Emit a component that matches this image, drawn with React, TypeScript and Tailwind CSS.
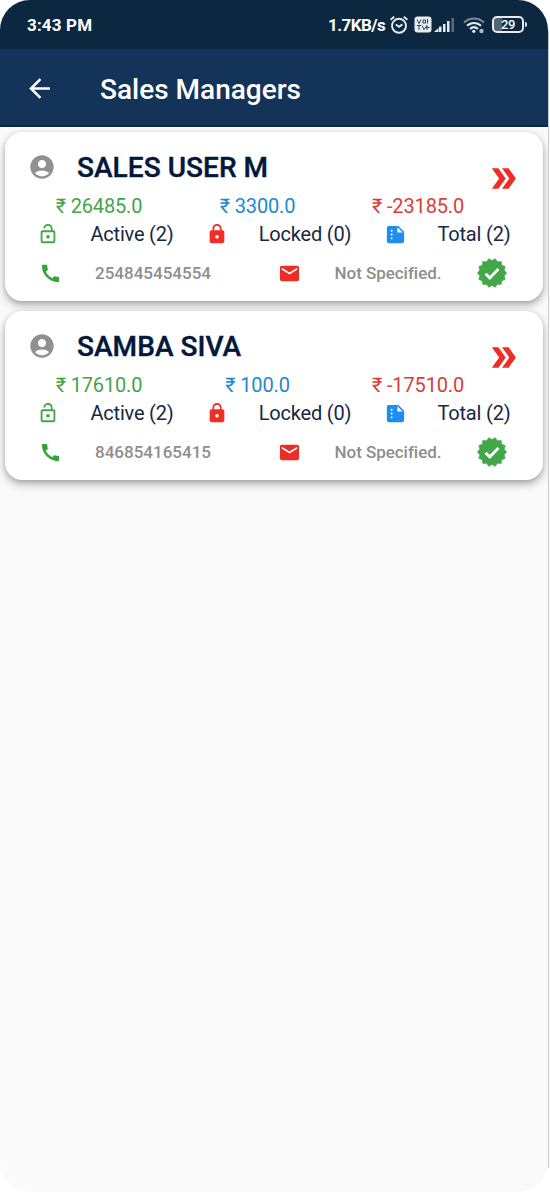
import React from 'react';
import {
    MdAccountCircle,
    MdArrowBack,
    MdCall,
    MdDoubleArrow,
    MdEmail,
    MdLock,
    MdLockOpen,
    MdSummarize,
} from 'react-icons/md';

interface Manager {
    id: number;
    name: string;
    credit: string;
    paid: string;
    balance: string;
    active: number;
    locked: number;
    total: number;
    phone: string;
    email?: string;
}

const managers: Manager[] = [
    { id: 1, name: 'SALES USER M', credit: '26485.0', paid: '3300.0', balance: '-23185.0', active: 2, locked: 0, total: 2, phone: '254845454554' },
    { id: 2, name: 'SAMBA SIVA', credit: '17610.0', paid: '100.0', balance: '-17510.0', active: 2, locked: 0, total: 2, phone: '846854165415' },
];

// Seal outline with 14 teeth
const sealPoints = Array.from({ length: 28 }, (_, i) => {
    const r = i % 2 === 0 ? 14.7 : 12.5;
    const a = (i * Math.PI) / 14;
    return `${(15 + r * Math.cos(a)).toFixed(2)},${(15 + r * Math.sin(a)).toFixed(2)}`;
}).join(' ');

const VerifiedSeal: React.FC = () => (
    <svg viewBox="0 0 30 30" className="w-[30px] h-[30px] shrink-0">
        <polygon points={sealPoints} fill="#43a648" stroke="#43a648" strokeWidth="0.6" strokeLinejoin="round" />
        <path d="M8.5 15.7l4.3 4.2 8.6-9" fill="none" stroke="#fff" strokeWidth="2.9" />
    </svg>
);

const StatusBar: React.FC = () => (
    <div className="h-[49px] bg-[#0c2840] flex items-center pl-[27px] pr-[21px] text-white text-[17px] font-bold">
        <span className="w-[67px] pt-[2px] whitespace-nowrap tracking-[0.15px]">3:43 PM</span>
        <div className="ml-auto flex items-center">
            <span className="w-[59px] pt-[2px] whitespace-nowrap tracking-[-0.55px]">1.7KB/s</span>
            {/* Alarm */}
            <svg viewBox="0 0 20 20" className="w-5 h-5 ml-[2px]" fill="none" stroke="#e6ebef" strokeWidth="1.9">
                <circle cx="10" cy="10.8" r="7" />
                <path d="M6.8 9.4l3.2 2.4 3.4-2.4M1.6 4.8L5.2 1.8M18.4 4.8L14.8 1.8" />
            </svg>
            {/* VoLTE */}
            <svg viewBox="0 0 18 17" className="w-[18px] h-[17px] ml-[5px]">
                <rect x="0.5" y="0.5" width="17" height="16" rx="3" fill="#e6ebef" />
                <path d="M3 3.5l2 4 2-4M9 4h2.5v3H9zM13.5 3v4.5M3 9.5h4M5 9.5v4.5M8 9.5l2 4 3-4v4.5M12.5 11.5h3" fill="none" stroke="#0c2840" strokeWidth="1" opacity="0.85" />
            </svg>
            {/* Signal */}
            <svg viewBox="0 0 21 16" className="w-[21px] h-4 ml-[2px]" fill="#e6ebef">
                <path d="M0 15l4.500-4v4z" />
                <rect x="5" y="9.5" width="2.5" height="5.5" />
                <rect x="9" y="7" width="2.5" height="8" />
                <rect x="13" y="4" width="2.5" height="11" />
                <rect x="17.5" y="1" width="2.5" height="14" opacity="0.35" />
            </svg>
            {/* Wi-Fi */}
            <svg viewBox="0 0 22 18" className="w-[22px] h-[18px] ml-[8px]" fill="none" stroke="#e6ebef" strokeWidth="2">
                <path d="M1 6.5C6.5 1 15.5 1 21 6.5" opacity="0.5" />
                <path d="M4 9.8c4-3.9 10-3.9 14 0M7 13c2.5-2.3 5.5-2.3 8 0" />
                <circle cx="10.8" cy="15.3" r="1.6" fill="#e6ebef" stroke="none" />
                <circle cx="18.5" cy="15" r="2.2" fill="#aab6c0" stroke="none" />
            </svg>
            {/* Battery */}
            <div className="ml-[7px] flex items-center">
                <div className="w-[32px] h-[17px] rounded-[5px] border-2 border-[#e6ebef] flex items-center justify-center bg-linear-to-r from-[#526575] from-30% to-[#0c2840] to-30%">
                    <span className="text-[13px] leading-none font-medium tracking-[-0.3px]">29</span>
                </div>
                <div className="w-[2px] h-[5px] ml-px bg-[#e6ebef] rounded-r-sm" />
            </div>
        </div>
    </div>
);

const ManagerCard: React.FC<{ manager: Manager }> = ({ manager }) => (
    <div className="h-[169px] bg-white rounded-[17px] pt-[17px] shadow-[0_4px_8px_rgba(0,0,0,0.3),0_1px_4px_rgba(0,0,0,0.12)]">
        <div className="h-9 flex items-center pl-[23px] pr-[22px]">
            <MdAccountCircle className="w-7 h-7 text-[#909090]" />
            <h2 className="ml-[21px] pt-[2px] text-[28px] leading-9 font-medium tracking-[0.05px] text-[#03183b] [-webkit-text-stroke:0.4px]">
                {manager.name}
            </h2>
            <MdDoubleArrow className="w-[35px] h-[35px] ml-auto mt-[22px] text-[#ee2d24]" />
        </div>

        <div className="h-[42px] flex items-start text-[20px] leading-[42px] tracking-[-0.15px]">
            <span className="w-[188px] text-center text-[#45a349]">₹ {manager.credit}</span>
            <span className="w-[129px] text-center text-[#2488d2]">₹ {manager.paid}</span>
            <span className="w-[192px] text-center text-[#dc3d36]">₹ {manager.balance}</span>
        </div>

        <div className="h-7 -mt-[7px] flex items-center text-[20px] tracking-[-0.2px] text-[#182842]">
            <MdLockOpen className="w-[22px] h-[22px] ml-[32px] text-[#43a648]" />
            <span className="w-[116px] ml-[15px] text-center">Active ({manager.active})</span>
            <MdLock className="w-[22px] h-[22px] ml-[16px] text-[#f12d24]" />
            <span className="w-[110px] ml-[22px] text-center">Locked ({manager.locked})</span>
            <MdSummarize className="w-[23px] h-[23px] ml-[24px] text-[#1d8df0]" />
            <span className="w-[90px] ml-[22px] text-center">Total ({manager.total})</span>
        </div>

        <div className="h-[30px] mt-[10px] flex items-center text-[17px] font-medium text-[#8e8e8e]">
            <MdCall className="w-[23px] h-[23px] ml-[34px] text-[#34a33a]" />
            <span className="w-[140px] ml-[21px] pt-px text-center">{manager.phone}</span>
            <MdEmail className="w-[23px] h-[23px] ml-[55px] text-[#ed2c24]" />
            <span className="w-[130px] ml-[22px] mr-[24px] pt-px text-center tracking-[-0.05px]">{manager.email ?? 'Not Specified.'}</span>
            <VerifiedSeal />
        </div>
    </div>
);

export default function App() {
    return (
        <div className="w-[550px] h-[1192px] bg-white flex font-[Roboto,sans-serif]">
            <div className="w-[548px] h-[1192px] rounded-[30px] overflow-hidden bg-[#fafafa]">
                <StatusBar />
                <header className="h-[78px] bg-[#133458] border-b-2 border-[#0b294a] flex items-center pl-[24px] text-white">
                    <MdArrowBack className="w-[31px] h-[31px] mt-[2px]" />
                    <h1 className="ml-[45px] pt-[5px] text-[28px] font-medium">Sales Managers</h1>
                </header>
                <main className="pl-[5px] pr-[5px] pt-[5px] flex flex-col gap-[10px]">
                    {managers.map(manager => (
                        <ManagerCard key={manager.id} manager={manager} />
                    ))}
                </main>
            </div>
            <div className="w-px mt-[30px] mb-[24px] bg-[#c9c9c9]" />
        </div>
    );
}
